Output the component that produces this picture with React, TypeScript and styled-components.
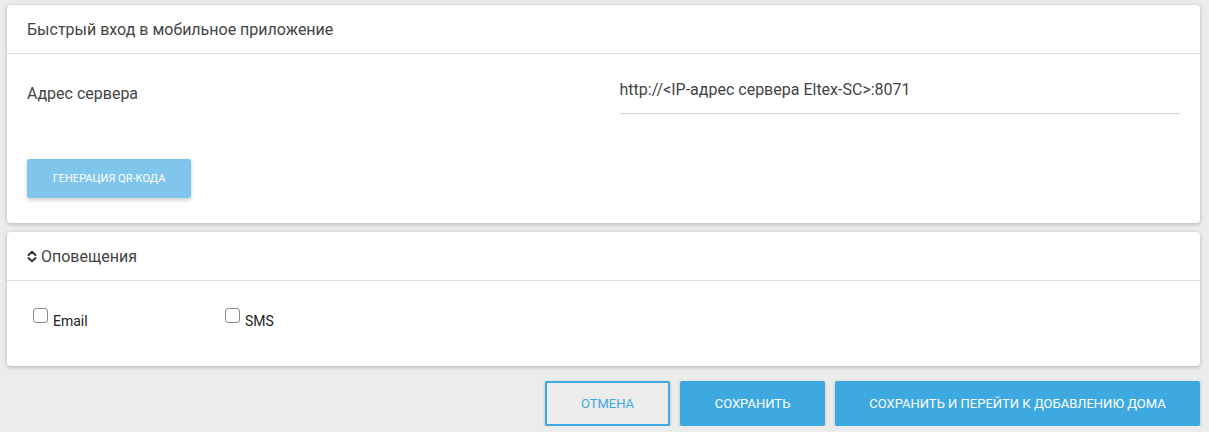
import styled, { createGlobalStyle } from "styled-components";

const GlobalStyle = createGlobalStyle`
  *, *::before, *::after {
    box-sizing: border-box;
  }
  html, body {
    margin: 0;
    padding: 0;
    background: #ececec;
    font-family: Roboto, "Liberation Sans", sans-serif;
  }
`;

const Page = styled.div`
  display: flex;
  flex-direction: column;
  gap: 9px;
  padding: 5px 9px 0 7px;
`;

const Card = styled.div`
  background: #ffffff;
  border-radius: 4px;
  box-shadow: 0 1px 4px rgba(0, 0, 0, 0.25);
`;

const CardHeader = styled.div`
  display: flex;
  align-items: center;
  gap: 4px;
  height: 49px;
  padding: 0 20px;
  border-bottom: 1px solid #dedede;
  font-size: 16px;
  color: #444444;
`;

const CardBody = styled.div`
  padding: 0 20px 25px 20px;
`;

const Row = styled.div`
  display: flex;
  align-items: flex-start;
`;

const Label = styled.div`
  width: 50%;
  padding-top: 30px;
  font-size: 16px;
  line-height: 19px;
  color: #444444;
`;

const Field = styled.div`
  flex: 1;
  margin-left: 16px;
  margin-top: 26px;
  padding-bottom: 14px;
  border-bottom: 1px solid #d3d6de;
  font-size: 16px;
  line-height: 19px;
  color: #444444;
`;

const QrButton = styled.button`
  display: block;
  margin-top: 45px;
  width: 164px;
  height: 39px;
  border: none;
  border-radius: 2px;
  background: #80c6ec;
  color: #ffffff;
  font-family: Roboto, "Liberation Sans", sans-serif;
  font-size: 11px;
  text-transform: uppercase;
  box-shadow: 0 2px 4px rgba(0, 0, 0, 0.2);
`;

const Checks = styled.div`
  display: flex;
  align-items: flex-start;
  height: 85px;
  padding: 27px 0 0 26px;
`;

const CheckItem = styled.label`
  display: flex;
  align-items: flex-start;
  width: 192px;
  font-size: 14px;
  color: #222222;
`;

const Box = styled.span`
  display: inline-block;
  flex: none;
  width: 15px;
  height: 15px;
  margin-right: 5px;
  border: 1px solid #8a8a8a;
  border-radius: 3px;
  background: #fff;
`;

const CheckText = styled.span`
  padding-top: 5px;
  line-height: 16px;
`;

const Actions = styled.div`
  display: flex;
  justify-content: flex-end;
  gap: 10px;
  margin-top: 6px;
`;

const ActionButton = styled.button<{ $outline?: boolean; $w: number }>`
  width: ${(p) => p.$w}px;
  height: 45px;
  border-radius: 2px;
  border: 2px solid ${(p) => (p.$outline ? "#3ea9e0" : "transparent")};
  background: ${(p) => (p.$outline ? "#ececec" : "#3ea9e0")};
  color: ${(p) => (p.$outline ? "#3ea9e0" : "#ffffff")};
  font-family: Roboto, "Liberation Sans", sans-serif;
  font-size: 13px;
  text-transform: uppercase;
  box-shadow: 0 1px 3px rgba(0, 0, 0, 0.25);
`;

const SortIcon = () => (
  <svg width="10" height="13" viewBox="0 0 10 13">
    <path
      d="M1.5 5 L5 1.8 L8.5 5 M1.5 8 L5 11.2 L8.5 8"
      fill="none"
      stroke="#333"
      strokeWidth="2"
      strokeLinecap="round"
      strokeLinejoin="round"
    />
  </svg>
);

export default function App() {
  return (
    <>
      <GlobalStyle />
      <Page>
        <Card>
          <CardHeader>Быстрый вход в мобильное приложение</CardHeader>
          <CardBody>
            <Row>
              <Label>Адрес сервера</Label>
              <Field>http://&lt;IP-адрес сервера Eltex-SC&gt;:8071</Field>
            </Row>
            <QrButton>Генерация QR-кода</QrButton>
          </CardBody>
        </Card>
        <Card>
          <CardHeader>
            <SortIcon />
            Оповещения
          </CardHeader>
          <Checks>
            <CheckItem>
              <Box />
              <CheckText>Email</CheckText>
            </CheckItem>
            <CheckItem>
              <Box />
              <CheckText>SMS</CheckText>
            </CheckItem>
          </Checks>
        </Card>
        <Actions>
          <ActionButton $outline $w={125}>Отмена</ActionButton>
          <ActionButton $w={145}>Сохранить</ActionButton>
          <ActionButton $w={365}>Сохранить и перейти к добавлению дома</ActionButton>
        </Actions>
      </Page>
    </>
  );
}
